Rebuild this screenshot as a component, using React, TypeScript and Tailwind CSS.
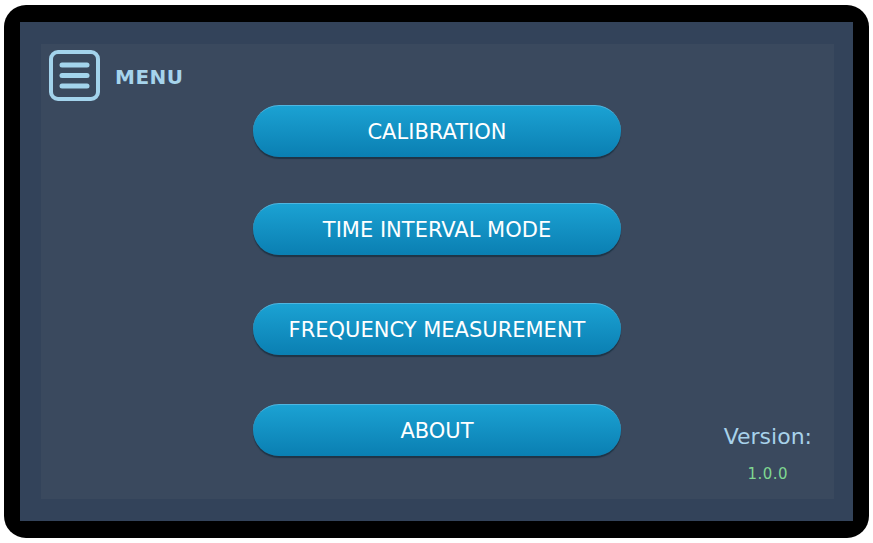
import React from 'react';

const items = [
  { label: 'CALIBRATION', mt: 'mt-0' },
  { label: 'TIME INTERVAL MODE', mt: 'mt-[46px]' },
  { label: 'FREQUENCY MEASUREMENT', mt: 'mt-[48px]' },
  { label: 'ABOUT', mt: 'mt-[49px]' },
];

function MenuIcon() {
  return (
    <svg width="51" height="51" viewBox="0 0 51 51" fill="none">
      <rect x="2" y="2" width="47" height="47" rx="7" stroke="#a3d3ec" strokeWidth="4" />
      <line x1="13" y1="15" x2="38" y2="15" stroke="#a3d3ec" strokeWidth="5" strokeLinecap="round" />
      <line x1="13" y1="25.5" x2="38" y2="25.5" stroke="#a3d3ec" strokeWidth="5" strokeLinecap="round" />
      <line x1="13" y1="36" x2="38" y2="36" stroke="#a3d3ec" strokeWidth="5" strokeLinecap="round" />
    </svg>
  );
}

export default function App(): React.ReactElement {
  return (
    <div
      className="h-[543px] w-[873px] bg-white pl-[4px] pt-[5px]"
      style={{ fontFamily: '"DejaVu Sans", Verdana, sans-serif' }}
    >
      <div className="h-[533px] w-[865px] rounded-[22px] bg-black pb-[17px] pl-[16px] pr-[16px] pt-[17px]">
        <div className="h-full w-full bg-[#33435a] pb-[22px] pl-[21px] pr-[19px] pt-[22px]">
          <div className="grid h-full w-full grid-cols-[212px_368px_1fr] grid-rows-[61px_1fr] bg-[#3a495e]">
            {/* Header */}
            <div className="col-span-3 flex items-start gap-[15px] pl-[8px] pt-[6px]">
              <MenuIcon />
              <span className="mt-[12px] text-[20px] font-bold tracking-[0.5px] text-[#a6d4ec]">MENU</span>
            </div>

            <div />

            {/* Buttons */}
            <div className="flex flex-col">
              {items.map((it) => (
                <button
                  key={it.label}
                  className={`${it.mt} h-[52px] w-[368px] rounded-full border-t border-[#4fb6e0] bg-gradient-to-b from-[#1ba2d3] to-[#0a7fb2] pt-[3px] text-[21px] text-white shadow-[0_2px_1px_#1f3446]`}
                >
                  {it.label}
                </button>
              ))}
            </div>

            {/* Version */}
            <div className="flex flex-col items-end justify-end pb-[14px] pr-[22px]">
              <div className="flex flex-col items-center">
                <span className="text-[22px] leading-[28px] text-[#a8d2ea]">Version:</span>
                <span className="mt-[12px] text-[15px] tracking-[0.5px] text-[#7fd691]">1.0.0</span>
              </div>
            </div>
          </div>
        </div>
      </div>
    </div>
  );
}
